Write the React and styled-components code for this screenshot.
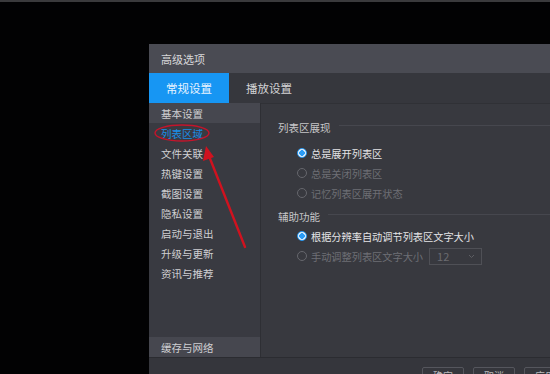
import styled, { createGlobalStyle } from "styled-components";

const GlobalStyle = createGlobalStyle`
  html, body {
    margin: 0;
    padding: 0;
    background: #000;
  }
  body {
    font-family: "Noto Sans CJK SC", "Noto Sans", sans-serif;
    font-size: 10.5px;
  }
`;

const Screen = styled.div`
  position: relative;
  width: 550px;
  height: 374px;
  overflow: hidden;
  background: #020203;
`;

const TopStrip = styled.div`
  height: 2px;
  background: #3a3a3c;
`;

const Dialog = styled.div`
  margin: 42px 0 0 149px;
  width: 401px;
  display: flex;
  flex-direction: column;
  background: #38393f;
`;

const TitleBar = styled.div`
  height: 29px;
  display: flex;
  align-items: center;
  padding-left: 12px;
  font-size: 11px;
  background: #4a4b53;
  color: #d8d8da;
`;

const TabBar = styled.div`
  height: 30px;
  display: flex;
  background: #36373d;
`;

const Tab = styled.div`
  width: 80px;
  display: flex;
  align-items: center;
  justify-content: center;
  font-size: 11.5px;
  color: ${(p) => (p.active ? "#e8f4ff" : "#d4d4d6")};
  background: ${(p) => (p.active ? "#1796f3" : "transparent")};
`;

const Body = styled.div`
  height: 254px;
  display: flex;
`;

const Sidebar = styled.div`
  width: 111px;
  display: flex;
  flex-direction: column;
  background: #393a41;
  border-right: 1px solid #2e2f34;
`;

const NavItem = styled.div`
  height: 20px;
  display: flex;
  align-items: center;
  padding-left: 12px;
  color: ${(p) => (p.current ? "#1a8ee8" : "#cfcfd2")};
  background: ${(p) => (p.active ? "#46474f" : "transparent")};
`;

const NavSpacer = styled.div`
  flex: 1;
`;

const Content = styled.div`
  flex: 1;
  padding: 13px 0 0 17px;
  background: #38393f;
  border-top: 1px solid #303136;
  display: flex;
  flex-direction: column;
`;

const SectionHead = styled.div`
  display: flex;
  align-items: center;
  gap: 8px;
  height: 20px;
  color: #c6c6c8;
  margin-bottom: ${(p) => p.gap || 0}px;

  &::after {
    content: "";
    flex: 1;
    height: 1px;
    margin-top: -4px;
    background: #46474e;
  }
`;

const Options = styled.div`
  display: flex;
  flex-direction: column;
  padding-left: 19px;
  margin-bottom: 3px;
`;

const Option = styled.div`
  height: 20px;
  display: flex;
  align-items: center;
  gap: 4px;
  font-size: 10.2px;
  color: ${(p) => (p.checked ? "#e4e4e6" : "#6e6f75")};
`;

const Radio = styled.span`
  width: 10px;
  height: 10px;
  box-sizing: border-box;
  border-radius: 50%;
  border: 1px solid ${(p) => (p.checked ? "#2a9cf6" : "#66676d")};
  background: ${(p) =>
    p.checked ? "radial-gradient(circle, #2a9cf6 0 2.6px, #e8f2fb 3px)" : "transparent"};
`;

const Select = styled.div`
  margin-left: 2px;
  width: 53px;
  height: 17px;
  box-sizing: border-box;
  border: 1px solid #4f5056;
  display: flex;
  align-items: center;
  justify-content: space-between;
  padding: 0 6px 0 7px;
  font-size: 11px;
  color: #6a6b70;
`;

const Footer = styled.div`
  height: 30px;
  display: flex;
  gap: 9px;
  padding: 9px 0 0 273px;
  box-sizing: border-box;
  border-top: 1px solid #2b2c31;
  background: #35363c;
`;

const Button = styled.div`
  width: 42px;
  height: 22px;
  box-sizing: border-box;
  border: 1px solid #55565d;
  border-radius: 2px;
  display: flex;
  justify-content: center;
  padding-top: 2px;
  color: #b8b8ba;
  font-size: 10px;
  line-height: 12px;
  flex-shrink: 0;
`;

const Annotation = styled.svg`
  position: absolute;
  left: 0;
  top: 0;
  pointer-events: none;
`;

const navItems = [
  "基本设置",
  "列表区域",
  "文件关联",
  "热键设置",
  "截图设置",
  "隐私设置",
  "启动与退出",
  "升级与更新",
  "资讯与推荐",
];

export default function App() {
  return (
    <Screen>
      <GlobalStyle />
      <TopStrip />
      <Dialog>
        <TitleBar>高级选项</TitleBar>
        <TabBar>
          <Tab active>常规设置</Tab>
          <Tab>播放设置</Tab>
        </TabBar>
        <Body>
          <Sidebar>
            {navItems.map((item, i) => (
              <NavItem key={item} active={i === 0} current={i === 1}>
                {item}
              </NavItem>
            ))}
            <NavSpacer />
            <NavItem active>缓存与网络</NavItem>
          </Sidebar>
          <Content>
            <SectionHead gap={6}>列表区展现</SectionHead>
            <Options>
              <Option checked>
                <Radio checked />
                总是展开列表区
              </Option>
              <Option>
                <Radio />
                总是关闭列表区
              </Option>
              <Option>
                <Radio />
                记忆列表区展开状态
              </Option>
            </Options>
            <SectionHead>辅助功能</SectionHead>
            <Options>
              <Option checked>
                <Radio checked />
                根据分辨率自动调节列表区文字大小
              </Option>
              <Option>
                <Radio />
                手动调整列表区文字大小
                <Select>
                  12
                  <svg width="7" height="5" viewBox="0 0 7 5">
                    <path d="M1 1l2.5 2.5L6 1" stroke="#5d5e63" fill="none" />
                  </svg>
                </Select>
              </Option>
            </Options>
          </Content>
        </Body>
        <Footer>
          <Button>确定</Button>
          <Button>取消</Button>
          <Button>应用</Button>
        </Footer>
      </Dialog>
      <Annotation width="550" height="374" viewBox="0 0 550 374">
        <ellipse
          cx="182"
          cy="133"
          rx="27"
          ry="8"
          fill="none"
          stroke="#c4142b"
          strokeWidth="1.4"
        />
        <path
          d="M245 247 L209 156"
          stroke="#d0121f"
          strokeWidth="2.4"
          strokeLinecap="round"
        />
        <path d="M206 146 L203 161 L214 157 Z" fill="#d0121f" />
      </Annotation>
    </Screen>
  );
}
